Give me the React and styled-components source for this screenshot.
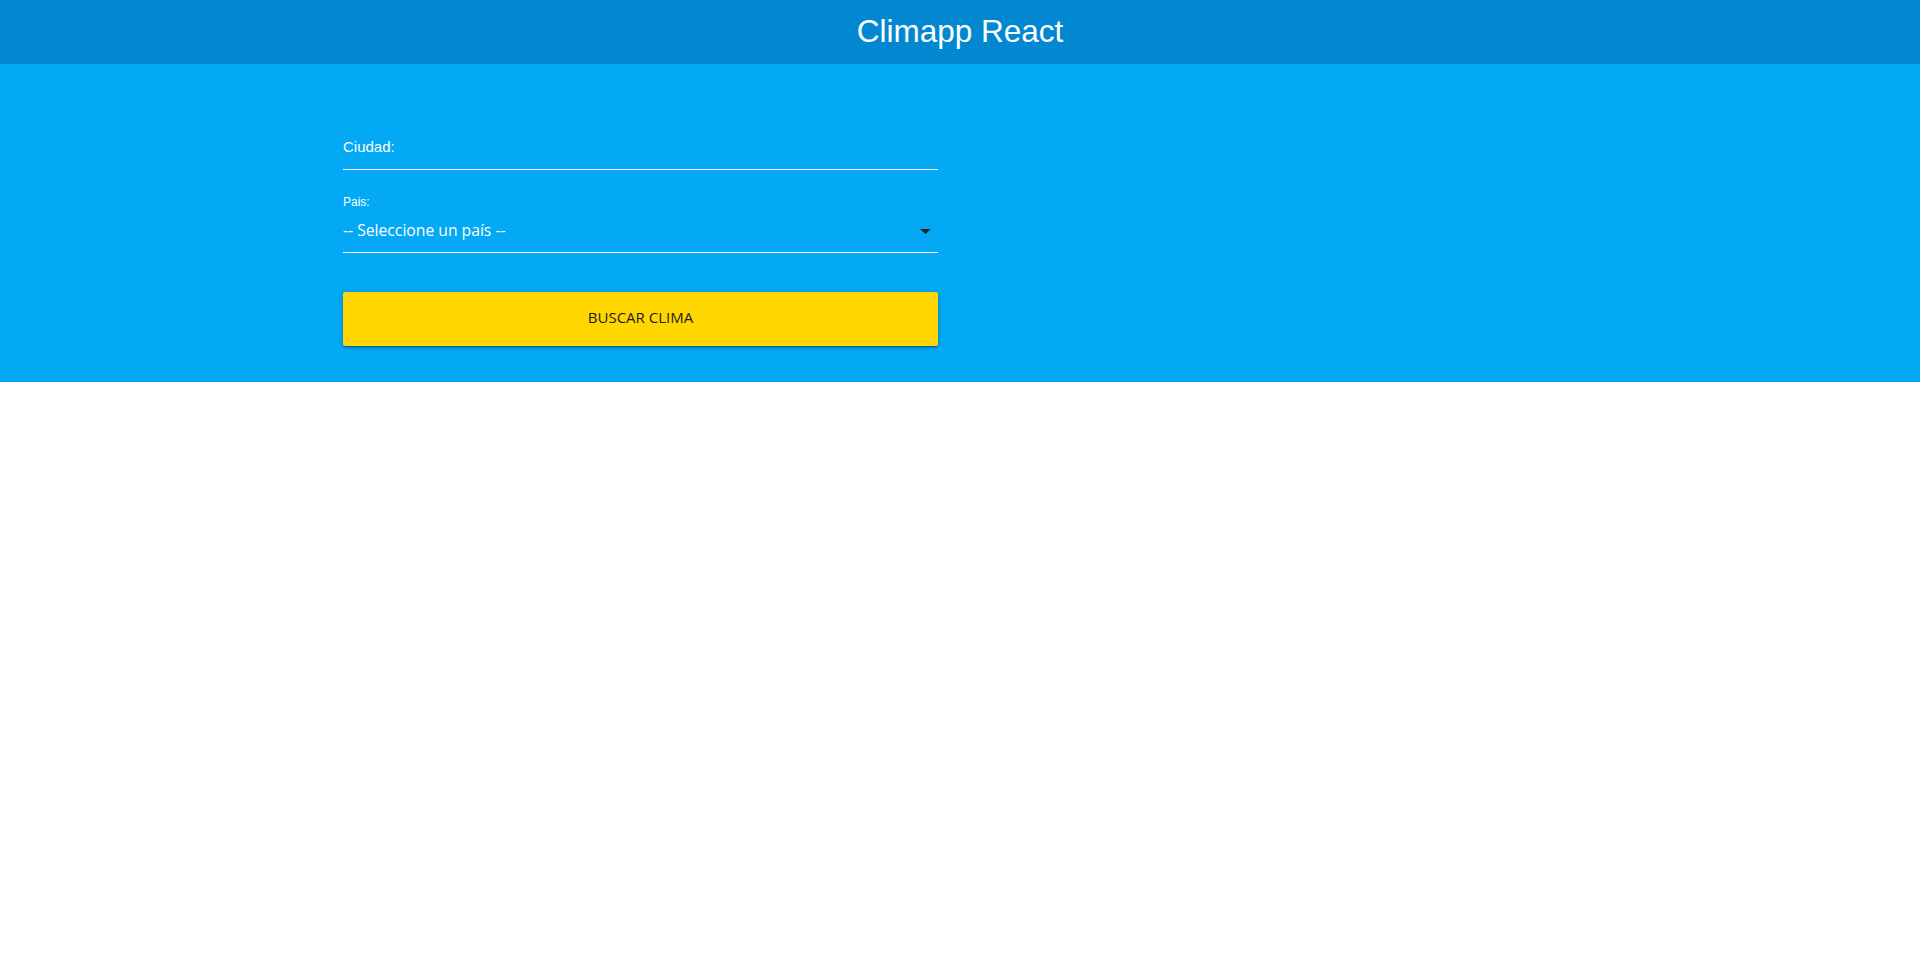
import React from "react";
import styled, { createGlobalStyle } from "styled-components";

const GlobalStyle = createGlobalStyle`
  html, body { margin: 0; padding: 0; background: #ffffff; }
  body { font-family: "Liberation Sans", Arial, sans-serif; }
  * { box-sizing: border-box; }
`;

const Header = styled.header`
  height: 64px;
  background: #0288d1;
  display: flex;
  justify-content: center;
`;

const Title = styled.h1`
  margin: 0;
  font-family: "Liberation Sans", Arial, sans-serif;
  font-weight: 400;
  font-size: 31.5px;
  line-height: 62px;
  color: #ffffff;
`;

const Hero = styled.section`
  background: #03a9f4;
  padding: 59px 0 36px;
`;

const Container = styled.div`
  width: 1344px;
  margin: 0 auto;
`;

const Form = styled.form`
  margin-left: 55px;
  width: 595px;
  display: flex;
  flex-direction: column;
`;

const InputField = styled.div`
  position: relative;
`;

const FloatLabel = styled.label`
  position: absolute;
  left: 0;
  top: 15px;
  font-family: "Liberation Sans", Arial, sans-serif;
  font-size: 15px;
  line-height: 17px;
  color: #ffffff;
  pointer-events: none;
`;

const TextInput = styled.input`
  display: block;
  width: 100%;
  height: 47px;
  margin: 0;
  padding: 0;
  border: none;
  border-bottom: 1px solid #ffffff;
  background: transparent;
  outline: none;
  color: #ffffff;
  font-family: "Open Sans", sans-serif;
  font-size: 16px;
`;

const SelectField = styled.div`
  margin-top: 27px;
  display: flex;
  flex-direction: column;
`;

const SmallLabel = styled.label`
  display: block;
  font-family: "Liberation Sans", Arial, sans-serif;
  font-size: 12px;
  line-height: 10px;
  height: 12px;
  color: #ffffff;
`;

const SelectBox = styled.div`
  position: relative;
  height: 44px;
  border-bottom: 1px solid #ffffff;
  display: flex;
  align-items: center;
  justify-content: space-between;
  padding-right: 7px;
`;

const SelectValue = styled.span`
  font-family: "Open Sans", "Noto Sans", sans-serif;
  font-size: 15.7px;
  color: #ffffff;
  padding-bottom: 1px;
`;

const Caret = styled.svg`
  width: 11px;
  height: 5px;
  display: block;
  margin-top: 1px;
`;

const Button = styled.button`
  margin-top: 39px;
  height: 54px;
  width: 100%;
  padding: 0 0 4px;
  border: none;
  border-radius: 2px;
  background: #ffd600;
  color: #1c1c1c;
  font-family: "Open Sans", "Noto Sans", sans-serif;
  font-size: 15px;
  text-transform: uppercase;
  cursor: pointer;
  box-shadow: 0 2px 2px 0 rgba(0, 0, 0, 0.14), 0 3px 1px -2px rgba(0, 0, 0, 0.12),
    0 1px 5px 0 rgba(0, 0, 0, 0.2);
`;

export default function App() {
  return (
    <>
      <GlobalStyle />
      <Header>
        <Title>Climapp React</Title>
      </Header>
      <Hero>
        <Container>
          <Form onSubmit={(e) => e.preventDefault()}>
            <InputField>
              <TextInput id="ciudad" type="text" />
              <FloatLabel htmlFor="ciudad">Ciudad:</FloatLabel>
            </InputField>
            <SelectField>
              <SmallLabel>Pais:</SmallLabel>
              <SelectBox>
                <SelectValue>-- Seleccione un país --</SelectValue>
                <Caret viewBox="0 0 11 5">
                  <polygon points="0,0 11,0 5.5,5" fill="#1e2228" />
                </Caret>
              </SelectBox>
            </SelectField>
            <Button type="submit">Buscar Clima</Button>
          </Form>
        </Container>
      </Hero>
    </>
  );
}
